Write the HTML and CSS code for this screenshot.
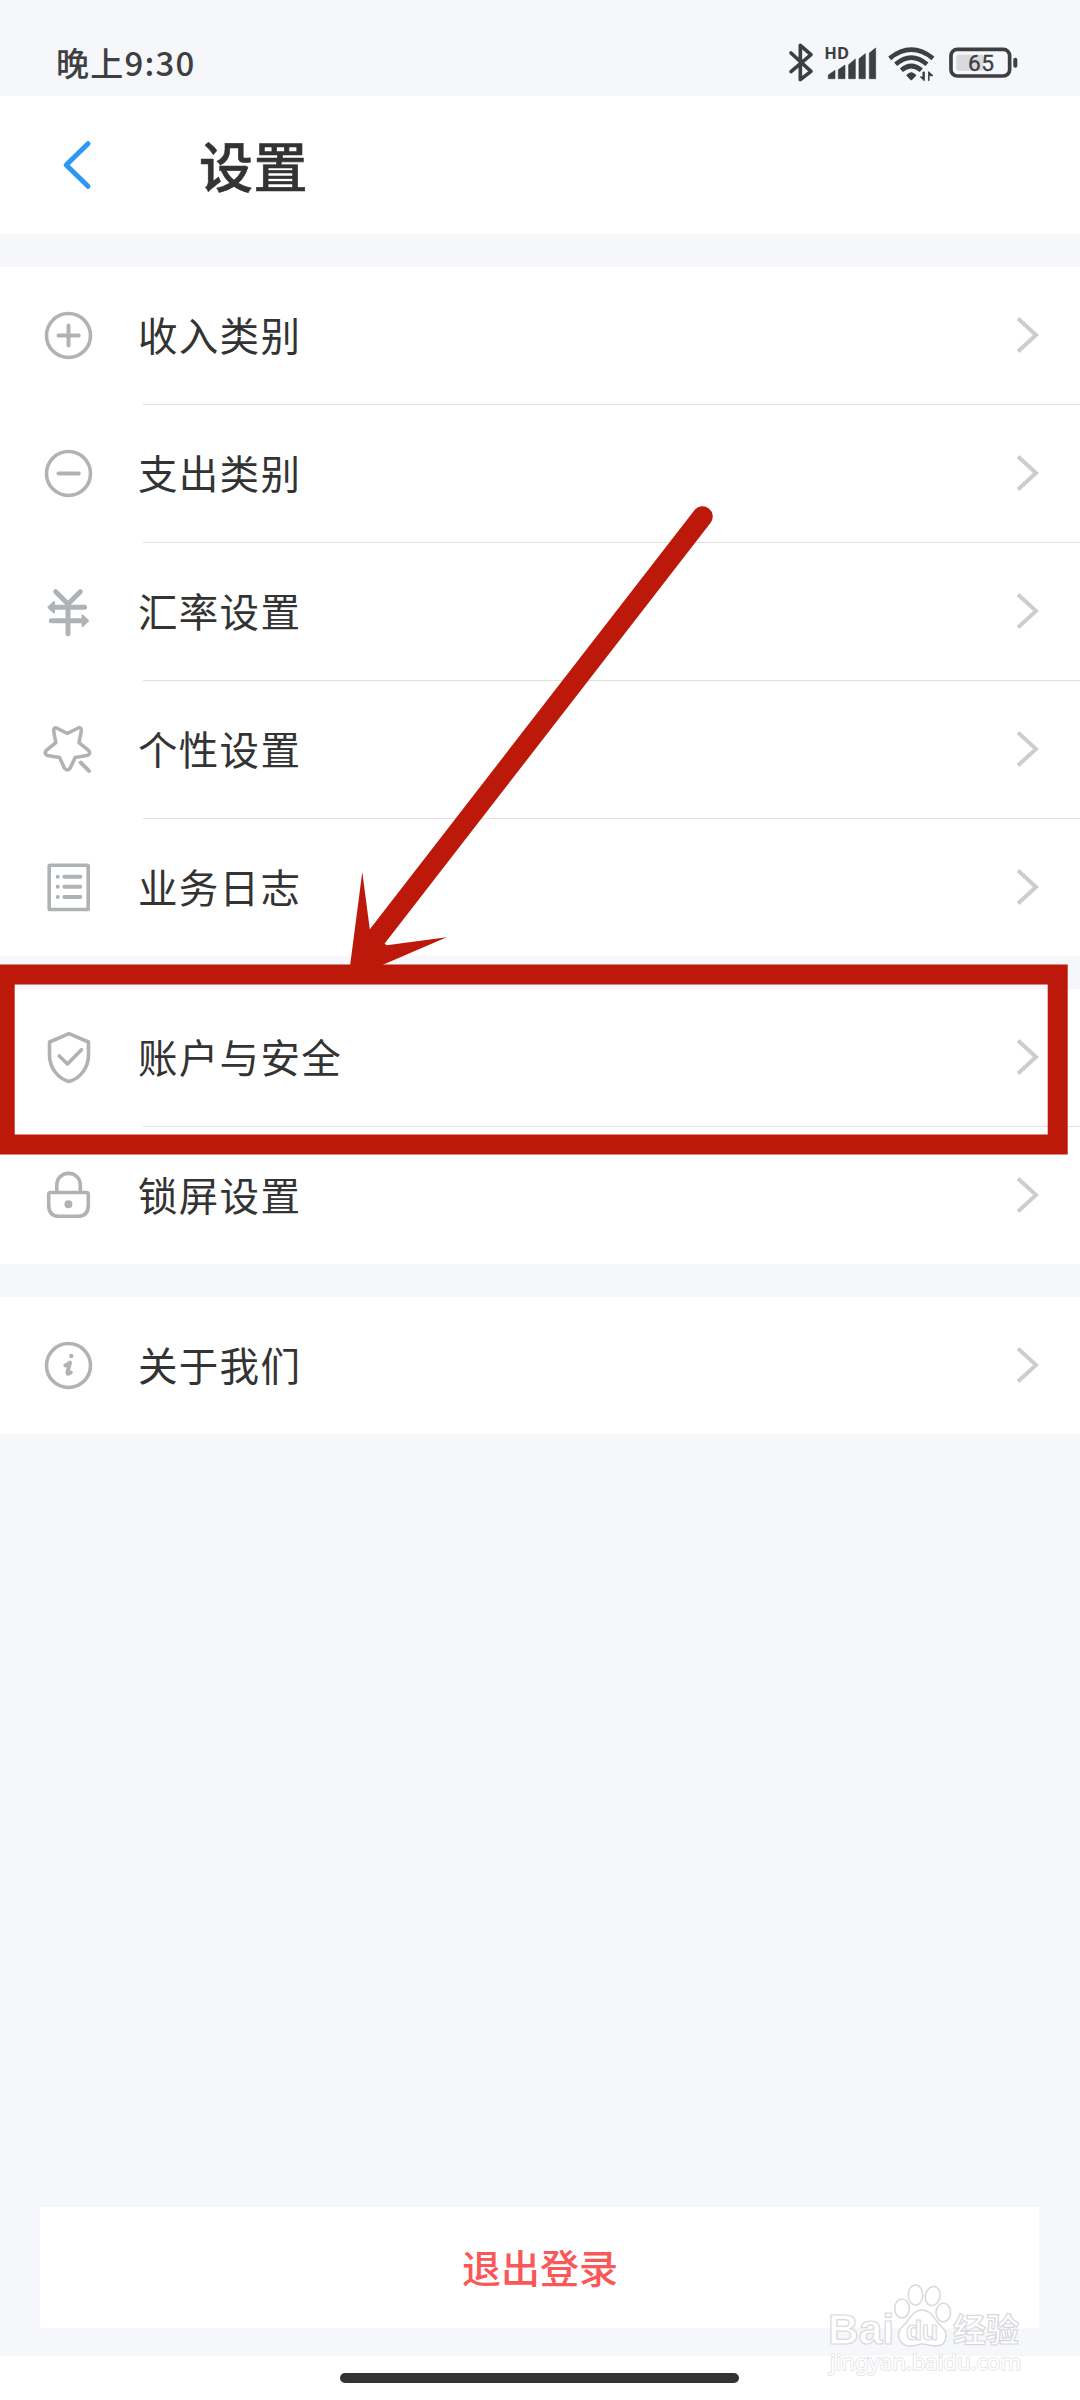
FILE: index.html
```html
<!DOCTYPE html>
<html lang="zh-CN">
<head>
<meta charset="utf-8">
<title>设置</title>
<link rel="stylesheet" href="styles.css">
</head>
<body>
<div class="screen">
  <div class="status">
    <span class="time">晚上9:30</span>
    <svg class="status-icons" viewBox="0 0 700 120">
      <g fill="none" stroke="#3e3f41" stroke-width="11" stroke-linecap="round" stroke-linejoin="round">
        <path d="M12 30L72 85L40 110V7L72 35L12 86"/>
      </g>
      <text class="hd" x="112" y="47" textLength="74" lengthAdjust="spacingAndGlyphs">HD</text>
      <g fill="#3e3f41">
        <path d="M124 107V96L144 82V107ZM154 107V80L174 66V107ZM185 107V65L205 48V107ZM216 107V47L235 32V107ZM247 107V30L266 15V107Z" stroke="#3e3f41" stroke-width="2" stroke-linejoin="round"/>
        <path d="M373 110L360 97Q373 82 386 97Z" stroke="#3e3f41" stroke-width="4" stroke-linejoin="round"/>
        <path d="M408 87V102H400L412 113V87ZM426 113V98H438L425 86V113Z" stroke="#3e3f41" stroke-width="3"/>
      </g>
      <g fill="none" stroke="#3e3f41" stroke-width="14">
        <path d="M308 46Q373-6 438 46"/>
        <path d="M326 64Q373 24 420 64"/>
        <path d="M343 82Q373 56 403 82"/>
      </g>
      <rect x="508" y="35" width="82" height="48" rx="8" fill="#d9dade"/>
      <rect x="492" y="19" width="176" height="80" rx="19" fill="none" stroke="#3e3f41" stroke-width="11"/>
      <rect x="679" y="44" width="12" height="30" rx="6" fill="#3e3f41"/>
      <text class="level" x="543" y="85" textLength="78">65</text>
    </svg>
  </div>
  <header class="header">
    <svg class="back" viewBox="0 0 36 54"><path d="M28 5.7L6.2 27L28 48.3"/></svg>
    <h1 class="title">设置</h1>
  </header>

  <section class="group">
    <div class="row">
      <svg class="icon" viewBox="0 0 60 61"><circle cx="30.5" cy="30.5" r="22"/><path class="bold" d="M20.5 30.5H40.7M30.5 20.5V40.6"/></svg>
      <div class="cell"><span>收入类别</span><svg class="chev" viewBox="0 0 26 40"><path d="M4 3.5L22 20L4 36.5"/></svg></div>
    </div>
    <div class="row">
      <svg class="icon" viewBox="0 0 60 61"><circle cx="30.5" cy="30.5" r="22"/><path class="bold" d="M20.5 30.5H40.7"/></svg>
      <div class="cell"><span>支出类别</span><svg class="chev" viewBox="0 0 26 40"><path d="M4 3.5L22 20L4 36.5"/></svg></div>
    </div>
    <div class="row">
      <svg class="icon" viewBox="0 0 60 61"><path class="heavy" d="M17.7 10.7L30 23L42.3 10.7M30 23V52.7M14 26.3H46.5M13.3 39.7H46"/><path class="solid" d="M10.5 26.3L16 21V31.6ZM50 39.7L44.5 34.4V45Z"/></svg>
      <div class="cell"><span>汇率设置</span><svg class="chev" viewBox="0 0 26 40"><path d="M4 3.5L22 20L4 36.5"/></svg></div>
    </div>
    <div class="row">
      <svg class="icon" viewBox="0 0 60 61"><path d="M29.3 14.5L40.2 9Q43.6 8 43.3 12L41 23.7L50.8 31.7Q53 35 49 36.5L37.2 38.5L32.2 49Q29.3 53 26.4 49L21.5 38.5L9.5 36.5Q6 35 8 31.7L17.8 23.7L15.7 12Q15.5 8 18.7 9Z"/><path class="bold" d="M42.7 43.5L51 51.8"/></svg>
      <div class="cell"><span>个性设置</span><svg class="chev" viewBox="0 0 26 40"><path d="M4 3.5L22 20L4 36.5"/></svg></div>
    </div>
    <div class="row">
      <svg class="icon" viewBox="0 0 60 61"><rect x="11.2" y="8.2" width="39" height="44.3" rx="0.8"/><path class="bold" d="M26.3 19.7H42.3M26.3 29.8H42.3M26.3 40H42.3M19.7 19.7h.1M19.7 29.8h.1M19.7 40h.1"/></svg>
      <div class="cell"><span>业务日志</span><svg class="chev" viewBox="0 0 26 40"><path d="M4 3.5L22 20L4 36.5"/></svg></div>
    </div>
  </section>

  <section class="group">
    <div class="row">
      <svg class="icon" viewBox="0 0 60 61"><path d="M31 6.7L50.5 15V28C50.5 41 42 51.5 31 54.5C20 51.5 11.5 41 11.5 28V15Z"/><path d="M21.3 29L29.5 37L43.5 22.7"/></svg>
      <div class="cell"><span>账户与安全</span><svg class="chev" viewBox="0 0 26 40"><path d="M4 3.5L22 20L4 36.5"/></svg></div>
    </div>
    <div class="row">
      <svg class="icon" viewBox="0 0 60 61"><path d="M18.8 27V20C18.8 4.5 42.3 4.5 42.3 20V27"/><path d="M12.500 27.500H48.500Q50.300 27.500 50.300 29.500V40Q50.300 51.300 40 51.300H21Q10.700 51.300 10.700 40V29.500Q10.700 27.500 12.500 27.500Z"/><circle class="solid" cx="30.400" cy="39.300" r="3"/></svg>
      <div class="cell"><span>锁屏设置</span><svg class="chev" viewBox="0 0 26 40"><path d="M4 3.5L22 20L4 36.5"/></svg></div>
    </div>
  </section>

  <section class="group">
    <div class="row">
      <svg class="icon" viewBox="0 0 60 61"><circle cx="30.5" cy="30.5" r="22"/><path class="bold" d="M27.300 30.500Q30.500 29.500 32 27.500L29.700 36.500Q28.700 40.500 32.800 37.500"/><circle class="solid" cx="33.300" cy="21" r="1.200"/></svg>
      <div class="cell"><span>关于我们</span><svg class="chev" viewBox="0 0 26 40"><path d="M4 3.5L22 20L4 36.5"/></svg></div>
    </div>
  </section>

  <button class="logout">退出登录</button>
  <div class="navbar"><div class="handle"></div></div>

  <svg class="annotation" viewBox="0 0 1080 2400">
    <path d="M702.500 516.500L376 938" fill="none" stroke="#bd190a" stroke-width="20.500" stroke-linecap="round"/>
    <path d="M362.300 872L350 966H380L446.700 937.300L386.700 945.300L370.300 933.300Z" fill="#bd190a"/>
    <path d="M-5 974.400H1057.700V1144.500H-5" fill="none" stroke="#bd190a" stroke-width="20"/>
    <path d="M4.700 970V1150" fill="none" stroke="#bd190a" stroke-width="20"/>
  </svg>

  <svg class="watermark" viewBox="0 0 210 110">
    <g fill="#fff" stroke="#d9d9dc" stroke-width="1.500">
      <ellipse cx="82" cy="28.500" rx="7.300" ry="9.500"/>
      <ellipse cx="95.500" cy="15" rx="7.300" ry="10"/>
      <ellipse cx="112.700" cy="16" rx="7.300" ry="9.700" transform="rotate(12 112.700 16)"/>
      <ellipse cx="123.300" cy="32.500" rx="7.300" ry="9.300"/>
      <path d="M102 30C92 30 90 40 83 46C74 54 80 66 90 66C96 66 98 64 102 64C107 64 110 66 116 66C126 66 130 54 121 46C114 40 112 30 102 30Z"/>
    </g>
    <text class="brand" x="8" y="64" textLength="66" lengthAdjust="spacingAndGlyphs">Bai</text>
    <text class="paw" x="86" y="60" textLength="32" lengthAdjust="spacingAndGlyphs">du</text>
    <text class="brand-cn" x="133" y="62" textLength="66" lengthAdjust="spacingAndGlyphs">经验</text>
    <text class="site" x="10" y="90" textLength="191" lengthAdjust="spacingAndGlyphs">jingyan.baidu.com</text>
  </svg>
</div>
</body>
</html>
```
FILE: styles.css
```css
* { box-sizing: border-box; }
body {
  margin: 0;
  background: #f5f7fb;
  color: #333;
  font-family: "Noto Sans CJK SC", sans-serif;
}
.screen {
  position: relative;
  width: 1080px;
  height: 2400px;
  overflow: hidden;
  display: flex;
  flex-direction: column;
}
.status {
  height: 96px;
  flex: none;
  display: flex;
  justify-content: space-between;
  padding: 38px 60px 0 56px;
}
.time {
  font-size: 33px;
  line-height: 48px;
  font-weight: 500;
  color: #3e3f41;
  letter-spacing: 1.2px;
}
.status-icons { width: 233.3px; height: 40px; margin-top: 5px; }
.hd { font: 700 47px "Noto Sans", sans-serif; fill: #3e3f41; }
.level { font: 400 68px Roboto, sans-serif; fill: #3e3f41; stroke: #3e3f41; stroke-width: 1px; }
.header {
  height: 138px;
  flex: none;
  display: flex;
  align-items: center;
  background: #fff;
  padding-left: 60px;
}
.back { width: 36px; height: 54px; }
.back path {
  fill: none;
  stroke: #2d97f2;
  stroke-width: 5;
  stroke-linecap: round;
  stroke-linejoin: round;
}
.title {
  margin: -1px 0 0 103px;
  font-size: 54px;
  line-height: 80px;
  font-weight: 500;
  letter-spacing: 0.5px;
  -webkit-text-stroke: 0.6px #333;
}
.group { margin-top: 33px; background: #fff; flex: none; }
.row { display: flex; align-items: flex-start; height: 138px; padding: 38px 0 0 38px; position: relative; }
.row:last-child { height: 137px; }
.row:not(:last-child)::after {
  content: "";
  position: absolute;
  left: 143px;
  right: 0;
  bottom: 0;
  height: 1px;
  background: #e1e1e1;
}
.icon {
  width: 60px;
  height: 61px;
  flex: none;
  fill: none;
  stroke: #afb3b5;
  stroke-width: 3.6;
  stroke-linecap: round;
  stroke-linejoin: round;
}
.icon .bold { stroke-width: 4; }
.icon .heavy { stroke-width: 5; }
.icon .solid { fill: #afb3b5; stroke-width: 2; }
.cell {
  flex: 1;
  display: flex;
  align-items: flex-start;
  justify-content: space-between;
  margin-left: 40px;
  padding-right: 40px;
  font-size: 39.5px;
  line-height: 58px;
  letter-spacing: 1.3px;
}
.chev { width: 26px; height: 40px; margin-top: 10px; }
.chev path { fill: none; stroke: #cdcdcd; stroke-width: 4; }
.logout {
  margin: auto 41px 28px 40px;
  height: 121px;
  flex: none;
  border: 0;
  padding: 0 0 4px 1px;
  background: #fff;
  color: #fa5858;
  font: 500 39px/60px "Noto Sans CJK SC", sans-serif;
}
.navbar { height: 44px; flex: none; background: #fff; padding-top: 17px; }
.handle { width: 399px; height: 10px; border-radius: 5px; background: #333; margin-left: 340px; }
.annotation { position: absolute; left: 0; top: 0; width: 1080px; height: 2400px; }
.watermark { position: absolute; left: 820px; top: 2280px; width: 210px; height: 110px; }
.watermark text { fill: #fff; stroke: #d9d9dc; stroke-width: 1.2px; }
.watermark .brand { font: 700 43px "Liberation Sans", sans-serif; }
.watermark .paw { font: 700 27px "Liberation Sans", sans-serif; }
.watermark .brand-cn { font: 700 33px "Noto Sans CJK SC", sans-serif; }
.watermark .site { font: 400 22px "Noto Sans", sans-serif; stroke: #e2e2e4; stroke-width: 1.6px; paint-order: stroke; }
```
